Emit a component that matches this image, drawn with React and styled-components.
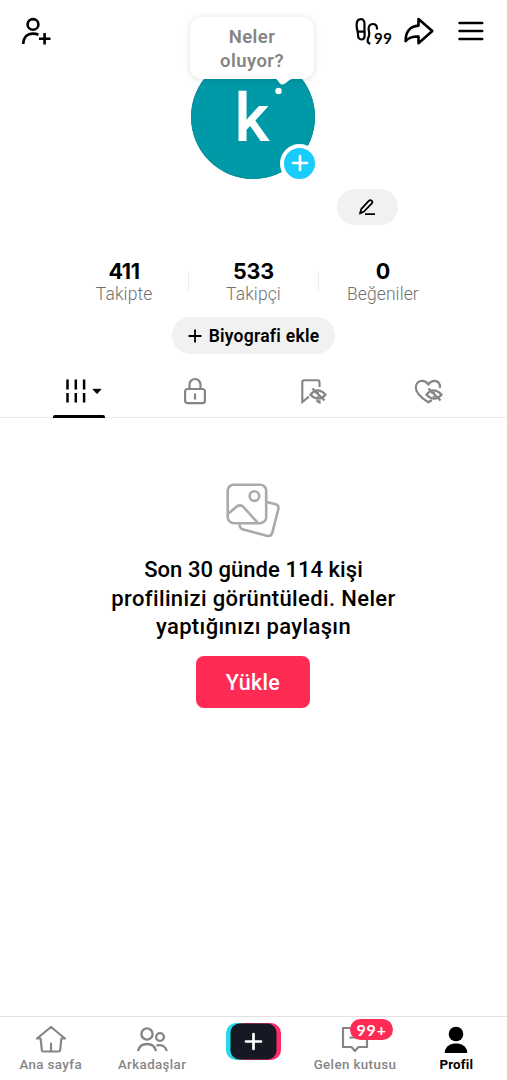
import React from "react";
import styled, { createGlobalStyle } from "styled-components";

const Global = createGlobalStyle`
  * { box-sizing: border-box; }
  body { margin: 0; background: #fff; }
  svg { display: block; overflow: visible; flex: none; }
`;

const Screen = styled.div`
  width: 507px;
  height: 1080px;
  display: flex;
  flex-direction: column;
  background: #fff;
  color: #000;
  font-family: Roboto, "Open Sans", sans-serif;
  overflow: hidden;
`;

const Icon = styled.svg.attrs({ fill: "none", stroke: "currentColor" })``;

const TopBar = styled.header`
  height: 54px;
  padding: 8px 23px 0 21px;
  display: flex;
  align-items: center;
  justify-content: space-between;
`;

const Actions = styled.div`
  display: flex;
  align-items: center;
`;

const Visits = styled.div`
  display: flex;
  align-items: flex-end;
  margin-right: 11px;
`;

const VisitCount = styled.span`
  font: 700 15px/14px Lato, sans-serif;
  letter-spacing: 0.5px;
  width: 19px;
  margin-left: -5px;
`;

const Share = styled.div`
  margin-right: 24px;
`;

const Avatar = styled.div`
  position: relative;
  align-self: center;
  width: 124px;
  height: 124px;
  margin: 0.5px 1px -0.5px 0;
  border-radius: 50%;
  background: #0099a7;
  box-shadow: inset 0 0 0 1px #0a8f9c;
  color: #fff;
  display: flex;
  justify-content: center;
`;

const Initial = styled.span`
  font: 500 67px/82px Roboto, sans-serif;
  margin-top: 22px;
  transform: translateX(-1px);
`;

const Bubble = styled.div`
  position: absolute;
  left: -1px;
  top: -38px;
  width: 124px;
  height: 62px;
  padding-top: 8px;
  border-radius: 12px;
  background: #fff;
  box-shadow: 0 1px 7px rgba(0, 0, 0, 0.13);
  color: #858585;
  text-align: center;
  font-size: 18.5px;
  font-weight: 600;
  line-height: 24px;
  letter-spacing: 0.45px;
`;

const BubbleTail = styled.svg`
  position: absolute;
  left: 82px;
  top: 60px;
  fill: #fff;
`;

const AddBadge = styled.div`
  position: absolute;
  right: -4px;
  bottom: -4px;
  width: 39px;
  height: 39px;
  border: 4px solid #fff;
  border-radius: 50%;
  background: #18cdfb;
  display: grid;
  place-items: center;
`;

const EditRow = styled.div`
  display: flex;
  justify-content: flex-end;
  padding: 11px 109px 0 0;
`;

const EditButton = styled.div`
  width: 61px;
  height: 36px;
  border-radius: 18px;
  background: #f1f1f1;
  display: grid;
  place-items: center;
  padding-right: 2px;
`;

const Stats = styled.div`
  display: flex;
  justify-content: center;
  margin-top: 34px;
  height: 50px;
`;

const Stat = styled.div`
  width: 129.4px;
  display: flex;
  flex-direction: column;
  align-items: center;
`;

const StatValue = styled.span`
  font: 700 21.5px/25px Inter, sans-serif;
  letter-spacing: ${(p) => p.$spacing || "0"};
`;

const StatLabel = styled.span`
  font-size: 17.5px;
  font-weight: 300;
  line-height: 20px;
  color: #707070;
  letter-spacing: 0.1px;
`;

const Divider = styled.span`
  width: 1px;
  height: 21px;
  margin: 12px -0.5px 0;
  background: #ededed;
`;

const BioButton = styled.div`
  align-self: center;
  margin-top: 8px;
  width: 163px;
  height: 37px;
  border-radius: 19px;
  background: #f1f1f1;
  display: flex;
  align-items: center;
  justify-content: center;
  gap: 7px;
  font-size: 17.5px;
  font-weight: 600;
  letter-spacing: 0.25px;
  white-space: nowrap;
`;

const Tabs = styled.nav`
  margin-top: 11px;
  height: 53px;
  padding: 0 20px 0 21px;
  border-bottom: 1px solid #ebebeb;
  display: flex;
`;

const Tab = styled.div`
  flex: 1;
  height: 53px;
  display: flex;
  flex-direction: column;
  align-items: center;
  color: ${(p) => (p.$active ? "#000" : "#858585")};
  svg {
    margin-top: 13px;
    margin-left: ${(p) => p.$shift || 0}px;
  }
  &::after {
    content: "";
    width: 52px;
    height: 3px;
    margin-top: auto;
    border-radius: 2px 2px 0 0;
    background: ${(p) => (p.$active ? "#000" : "transparent")};
  }
`;

const Empty = styled.main`
  flex: 1;
  display: flex;
  flex-direction: column;
  align-items: center;
  padding-top: 65px;
  color: #aaa;
`;

const Message = styled.div`
  margin-top: 16px;
  color: #000;
  text-align: center;
  font-size: 22px;
  font-weight: 500;
  line-height: 28.7px;
`;

const Line = styled.div`
  white-space: nowrap;
  letter-spacing: ${(p) => p.$spacing};
`;

const Upload = styled.div`
  margin: 14px 1px 0 0;
  width: 114px;
  height: 52px;
  border-radius: 8px;
  background: #fe2c55;
  color: #fff;
  display: grid;
  place-items: center;
  font-size: 21.5px;
  font-weight: 500;
  letter-spacing: 0.3px;
`;

const BottomNav = styled.nav`
  height: 64px;
  border-top: 1px solid #e1e1e1;
  display: flex;
`;

const NavItem = styled.div`
  position: relative;
  flex: 1;
  display: flex;
  flex-direction: column;
  align-items: center;
  padding-top: 6px;
  color: ${(p) => (p.$active ? "#000" : "#858585")};
`;

const NavLabel = styled.span`
  margin-top: 2px;
  font-size: 13.3px;
  font-weight: ${(p) => (p.$active ? 700 : 500)};
  line-height: 17px;
  letter-spacing: ${(p) => p.$spacing || "0.4px"};
  white-space: nowrap;
`;

const Count = styled.span`
  position: absolute;
  left: 46px;
  top: 2px;
  width: 43px;
  height: 21px;
  border-radius: 11px;
  background: #fe2c55;
  color: #fff;
  font: 700 16px/21px Lato, sans-serif;
  letter-spacing: 0.9px;
  text-align: center;
`;

const HiddenEye = () => (
  <g>
    <path d="M10.5 16.7q7-8.500 15 0q-7 8-15 0Z" strokeWidth="2.200" fill="#fff" />
    <path d="m12.500 10.500 12 12" strokeWidth="2.300" />
    <path d="M15.500 15.500q1.500-1.500 3.500-1M16.500 18.800q2.500.7 4-1" strokeWidth="1.500" />
  </g>
);

export default function App() {
  return (
    <Screen>
      <Global />
      <TopBar>
        <Icon width="31" height="28" viewBox="0 0 31 28" strokeWidth="2.6">
          <ellipse cx="12" cy="7.4" rx="5.4" ry="5.3" />
          <path d="M2.200 27c.2-7 4.300-10.400 9.800-10.400q3.300 0 5.400 1.300M23.600 16v11.500M18 21.800h11.500" />
        </Icon>
        <Actions>
          <Visits>
            <Icon width="24" height="27" viewBox="0 0 24 27" strokeWidth="2.200" strokeLinejoin="round">
              <path d="M1.600 7C1.600 3 3.400 1.200 6 1.200S9.800 3.400 9.500 7c-.3 3.500.3 7 .1 10.500 0 2.400-1.300 4-3.200 4s-3.400-1.600-3.300-4c.1-3-1.500-6.500-1.500-10.500ZM2.800 13.600h6.800" />
              <path d="M22 11.500V10c-.2-2.500-2-4-4.200-4-2.700 0-4.400 2-4.200 5 .1 2.400 1.400 4.500.4 7-.7 1.800-1.600 3-1.400 5 .1 1.400 1.200 2.400 2.700 2.700" />
            </Icon>
            <VisitCount>99</VisitCount>
          </Visits>
          <Share>
            <Icon width="30" height="28" viewBox="0 0 30 28" strokeWidth="2.600" strokeLinejoin="round">
              <path d="M14.500 2 28.300 14 14.500 26.200V19.600C8 19.300 4.500 21 1.600 24 1.500 15 6 9.200 14.500 8.600Z" />
            </Icon>
          </Share>
          <Icon width="26" height="20" viewBox="0 0 26 20" strokeWidth="2.500" strokeLinecap="round">
            <path d="M1.500 2h22.700M1.500 10h22.700M1.500 18h22.700" />
          </Icon>
        </Actions>
      </TopBar>

      <Avatar>
        <Initial>k</Initial>
        <Bubble>
          Neler<br />oluyor?
          <BubbleTail width="24" height="18" viewBox="0 0 24 18">
            <path d="M3 1Q6 3 8 6.500q2 2 5 0Q17 2.500 22 1Z" />
            <circle cx="6.500" cy="14" r="3.200" />
          </BubbleTail>
        </Bubble>
        <AddBadge>
          <Icon width="18" height="18" viewBox="0 0 18 18" strokeWidth="2.700" strokeLinecap="round">
            <path d="M9 2v14M2 9h14" />
          </Icon>
        </AddBadge>
      </Avatar>

      <EditRow>
        <EditButton>
          <Icon width="18" height="18" viewBox="0 0 18 18" strokeWidth="1.800" strokeLinejoin="round">
            <path d="M2 15.500 3.400 10.800 11 2.700q1.200-1.200 2.600 0t.2 2.700L6 13.500ZM7 16.200h10" />
          </Icon>
        </EditButton>
      </EditRow>

      <Stats>
        <Stat><StatValue $spacing="-0.3px">411</StatValue><StatLabel>Takipte</StatLabel></Stat>
        <Divider />
        <Stat><StatValue $spacing="-0.2px">533</StatValue><StatLabel>Takipçi</StatLabel></Stat>
        <Divider />
        <Stat><StatValue>0</StatValue><StatLabel>Beğeniler</StatLabel></Stat>
      </Stats>

      <BioButton>
        <Icon width="14" height="14" viewBox="0 0 14 14" strokeWidth="1.800">
          <path d="M7 .5v13M.5 7h13" />
        </Icon>
        <span>Biyografi ekle</span>
      </BioButton>

      <Tabs>
        <Tab $active $shift={8}>
          <Icon width="38" height="26" viewBox="0 0 38 26" strokeWidth="2.500">
            <path d="M3.500 1.500v10M11.800 1.500v10M20.100 1.500v10M3.500 15v9.500M11.800 15v9.500M20.100 15v9.500" />
            <path d="M29 11.300h8l-4 4.200Z" fill="currentColor" strokeWidth="1" strokeLinejoin="round" />
          </Icon>
        </Tab>
        <Tab $shift={-2}>
          <Icon width="24" height="28" viewBox="0 0 24 28" strokeWidth="2.200">
            <rect x="2.100" y="11" width="19.800" height="14.200" rx="2.500" />
            <path d="M6.500 11V6.500a5.500 5.500 0 0 1 11 0V11M12 15.500v6" />
          </Icon>
        </Tab>
        <Tab $shift={2}>
          <Icon width="26" height="28" viewBox="0 0 26 28" strokeWidth="2.100">
            <path d="M19.500 9V4q0-1.700-1.700-1.700H4Q2.300 2.300 2.300 4v20l6.600-5.400M16.500 22.500l3 1.800v-2" />
            <HiddenEye />
          </Icon>
        </Tab>
        <Tab $shift={-2}>
          <Icon width="28" height="28" viewBox="0 0 28 28" strokeWidth="2.200">
            <path d="M26 10c.4-4.300-2-7.200-5.500-7.200-3 0-4.600 1.400-6.200 3.600C12.800 4 11 2.800 8.300 2.800c-4 0-6.500 3-6.500 6.700 0 6.300 7.300 11.500 12.500 14.800q2-1.200 3.500-2.300" />
            <g transform="translate(2 0)"><HiddenEye /></g>
          </Icon>
        </Tab>
      </Tabs>

      <Empty>
        <Icon width="56" height="57" viewBox="0.600 0.600 56 57" strokeWidth="2.600">
          <rect x="2.300" y="2.300" width="38.500" height="38.500" rx="6" />
          <circle cx="29" cy="13.700" r="4.800" />
          <path d="m3 31 8.500-7q3-2 6 0L32 40" />
          <path d="m41 19.500 8.500 2q4.500 1.200 3.300 5.700L47 50q-1.200 4.500-5.800 3.300L18 47.200q-4-1.200-3.800-5.500" />
        </Icon>
        <Message>
          <Line $spacing="0.05px">Son 30 günde 114 kişi</Line>
          <Line $spacing="0.370px">profilinizi görüntüledi. Neler</Line>
          <Line $spacing="0.350px">yaptığınızı paylaşın</Line>
        </Message>
        <Upload>Yükle</Upload>
      </Empty>

      <BottomNav>
        <NavItem>
          <Icon width="32" height="31" viewBox="0 0 32 31" strokeWidth="2.200" strokeLinejoin="round" strokeLinecap="round">
            <path d="M16 4 2 15.500h3.600l1.300 12q.1 1 1.200 1h15.800q1.100 0 1.200-1l1.300-12H30ZM16 20.500v7" />
          </Icon>
          <NavLabel>Ana sayfa</NavLabel>
        </NavItem>
        <NavItem>
          <Icon width="32" height="31" viewBox="0 0 32 31" strokeWidth="2.400">
            <circle cx="11" cy="11" r="5.600" />
            <circle cx="24" cy="14" r="3.900" />
            <path d="M2 28c1-4.800 4.500-7 9-7s8 2.200 9 7M20.500 22.500c5-1.300 9 .8 10.300 5.500" />
          </Icon>
          <NavLabel>Arkadaşlar</NavLabel>
        </NavItem>
        <NavItem>
          <svg width="55" height="37" viewBox="0 0 55 37">
            <rect width="47" height="37" rx="10" fill="#25d9e9" />
            <rect x="8" width="47" height="37" rx="10" fill="#fe2c68" />
            <rect x="4.500" y=".5" width="46" height="36" rx="9" fill="#161823" />
            <path d="M27.500 11v15M20 18.500h15" stroke="#fff" strokeWidth="2.700" strokeLinecap="round" />
          </svg>
        </NavItem>
        <NavItem>
          <Icon width="28" height="31" viewBox="0 0 28 31" strokeWidth="2.200" strokeLinejoin="round">
            <path d="M2 5h24v19h-8.500L14 28l-3.500-4H2ZM8.500 14.500h11" />
          </Icon>
          <Count>99+</Count>
          <NavLabel>Gelen kutusu</NavLabel>
        </NavItem>
        <NavItem $active>
          <svg width="24" height="31" viewBox="0 0 24 31" fill="currentColor">
            <circle cx="12" cy="11" r="7.300" />
            <path d="M1 30Q.5 30 .7 28.500C2 23 6.500 20.500 12 20.500s10 2.500 11.300 8q.2 1.500-.8 1.500Z" />
          </svg>
          <NavLabel $active $spacing="0.200px">Profil</NavLabel>
        </NavItem>
      </BottomNav>
    </Screen>
  );
}
